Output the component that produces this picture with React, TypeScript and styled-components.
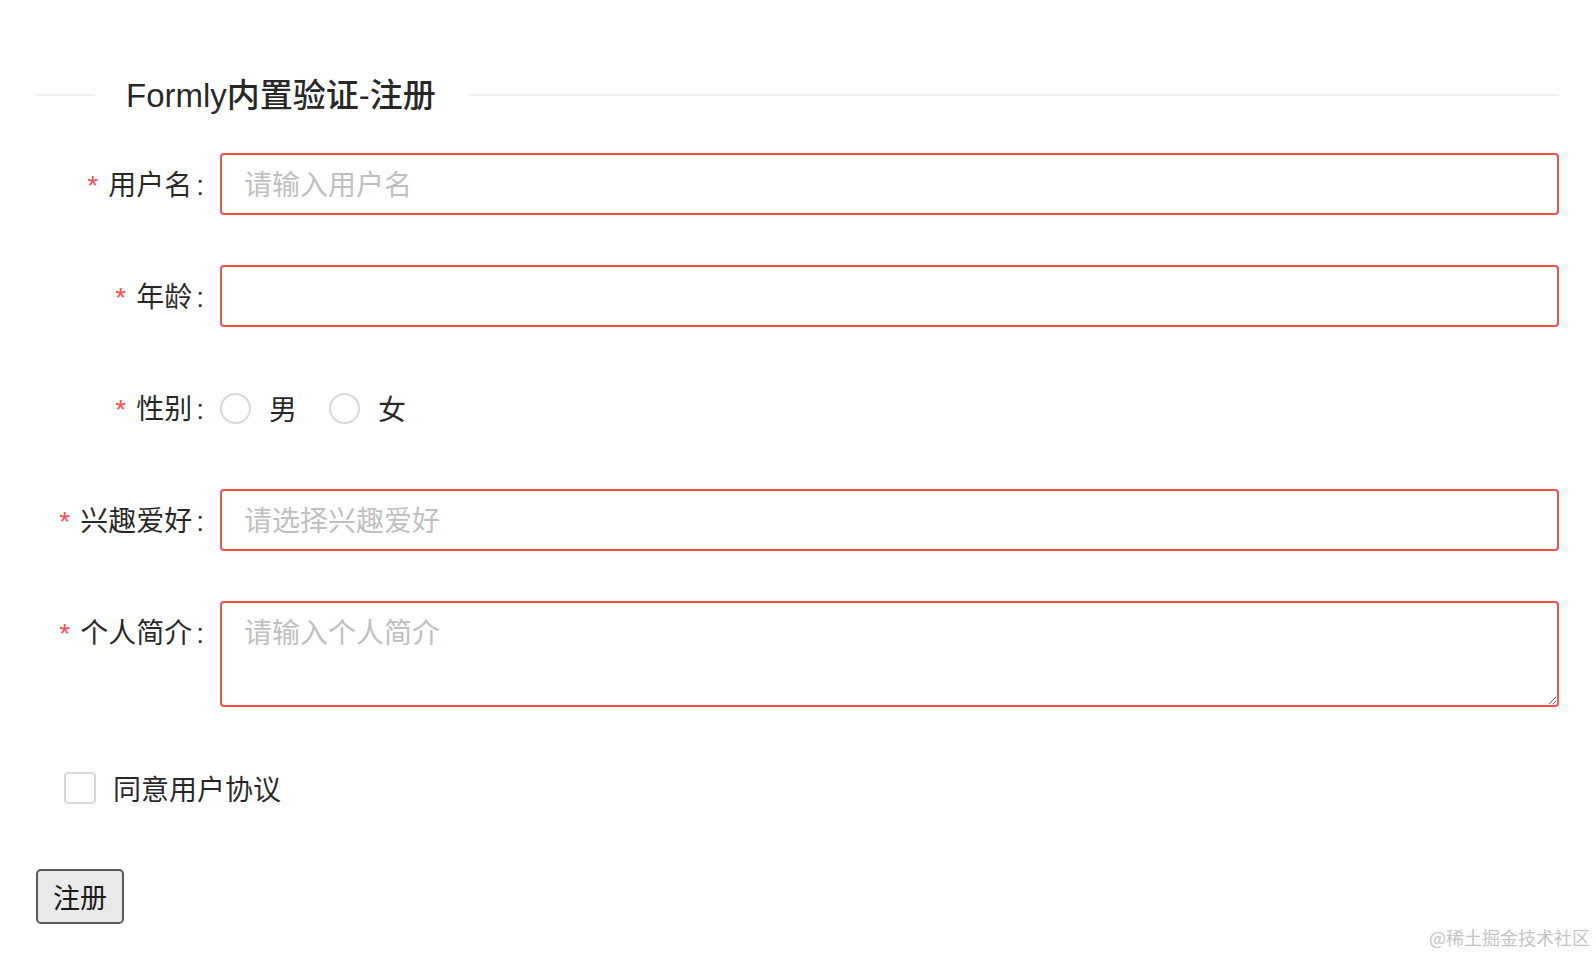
import styled, { createGlobalStyle } from "styled-components";

const GlobalStyle = createGlobalStyle`
    body {
        margin: 0;
        background: #ffffff;
        font-family: "Liberation Sans", "Noto Sans CJK SC", sans-serif;
        color: rgba(0, 0, 0, 0.85);
    }
`;

const Page = styled.div`
    position: relative;
    min-height: 954px;
    box-sizing: border-box;
    padding: 73px 37px 0 36px;
`;

const Divider = styled.div`
    display: flex;
    align-items: center;
    height: 44px;
`;

const Line = styled.div<{ $grow?: boolean }>`
    height: 2px;
    background-color: #f0f0f0;
    width: ${(p) => (p.$grow ? "auto" : "59px")};
    flex: ${(p) => (p.$grow ? 1 : "none")};
`;

const Title = styled.span`
    padding: 2px 33px 0 31px;
    font-size: 33px;
    font-weight: 500;
    line-height: 44px;
    color: rgba(0, 0, 0, 0.85);
`;

const Form = styled.form`
    margin-top: 36px;
    display: flex;
    flex-direction: column;
    gap: 50px;
`;

const Item = styled.div`
    display: flex;
    align-items: flex-start;
`;

const Label = styled.label`
    width: 168px;
    margin-right: 16px;
    flex: none;
    box-sizing: border-box;
    padding-top: 3px;
    text-align: right;
    font-size: 28px;
    line-height: 60px;
    height: 62px;
    white-space: nowrap;
    color: rgba(0, 0, 0, 0.85);
`;

const Required = styled.span`
    color: #ff4d4f;
    margin-right: 10px;
    font-family: "Liberation Sans", sans-serif;
`;

const Colon = styled.span`
    margin-left: 4px;
`;

const Control = styled.div`
    flex: 1;
    min-width: 0;
`;

const Input = styled.input`
    display: block;
    width: 100%;
    height: 62px;
    box-sizing: border-box;
    padding: 4px 22px 0;
    border: 2px solid #ef5350;
    border-radius: 4px;
    outline: none;
    font-family: inherit;
    font-size: 28px;
    color: rgba(0, 0, 0, 0.85);

    &::placeholder {
        color: #bfbfbf;
    }
`;

const TextArea = styled.textarea`
    display: block;
    width: 100%;
    height: 106px;
    box-sizing: border-box;
    padding: 10px 22px;
    border: 2px solid #ef5350;
    border-radius: 4px;
    outline: none;
    resize: vertical;
    font-family: inherit;
    font-size: 28px;
    line-height: 42px;
    color: rgba(0, 0, 0, 0.85);

    &::placeholder {
        color: #bfbfbf;
    }
`;

const RadioGroup = styled.div`
    display: flex;
    align-items: center;
    height: 62px;
`;

const RadioOption = styled.label`
    display: flex;
    align-items: center;
    margin-right: 32px;
    font-size: 28px;
    color: rgba(0, 0, 0, 0.85);
`;

const Circle = styled.span`
    width: 31px;
    height: 31px;
    box-sizing: border-box;
    border: 2px solid #d9d9d9;
    border-radius: 50%;
    margin-right: 18px;
`;

const CheckRow = styled.div`
    display: flex;
    align-items: center;
    height: 62px;
    padding-left: 28px;
    font-size: 28px;
    color: rgba(0, 0, 0, 0.85);
`;

const Box = styled.span`
    width: 32px;
    height: 32px;
    box-sizing: border-box;
    border: 2px solid #d9d9d9;
    border-radius: 4px;
    margin-right: 17px;
`;

const Submit = styled.button`
    align-self: flex-start;
    width: 88px;
    height: 55px;
    padding: 0;
    background-color: #e9e9e9;
    border: 2px solid #5a5a5a;
    border-radius: 5px;
    font-family: inherit;
    font-size: 27px;
    color: #1a1a1a;
`;

const Watermark = styled.div`
    position: absolute;
    right: 6px;
    bottom: 4px;
    font-size: 18px;
    color: #c4c4c4;
    font-family: "Noto Sans CJK SC", sans-serif;
`;

const fields = [
    { label: "用户名", placeholder: "请输入用户名" },
    { label: "年龄", placeholder: "" },
];

const App = () => {
    return (
        <Page>
            <GlobalStyle />
            <Divider>
                <Line />
                <Title>Formly内置验证-注册</Title>
                <Line $grow />
            </Divider>
            <Form onSubmit={(e) => e.preventDefault()}>
                {fields.map((f) => (
                    <Item key={f.label}>
                        <Label>
                            <Required>*</Required>
                            {f.label}
                            <Colon>:</Colon>
                        </Label>
                        <Control>
                            <Input placeholder={f.placeholder} />
                        </Control>
                    </Item>
                ))}
                <Item>
                    <Label>
                        <Required>*</Required>
                        性别
                        <Colon>:</Colon>
                    </Label>
                    <Control>
                        <RadioGroup>
                            <RadioOption>
                                <Circle />男
                            </RadioOption>
                            <RadioOption>
                                <Circle />女
                            </RadioOption>
                        </RadioGroup>
                    </Control>
                </Item>
                <Item>
                    <Label>
                        <Required>*</Required>
                        兴趣爱好
                        <Colon>:</Colon>
                    </Label>
                    <Control>
                        <Input readOnly placeholder="请选择兴趣爱好" />
                    </Control>
                </Item>
                <Item>
                    <Label>
                        <Required>*</Required>
                        个人简介
                        <Colon>:</Colon>
                    </Label>
                    <Control>
                        <TextArea placeholder="请输入个人简介" />
                    </Control>
                </Item>
                <CheckRow>
                    <Box />
                    同意用户协议
                </CheckRow>
                <Submit type="submit">注册</Submit>
            </Form>
            <Watermark>@稀土掘金技术社区</Watermark>
        </Page>
    );
};

export default App;
